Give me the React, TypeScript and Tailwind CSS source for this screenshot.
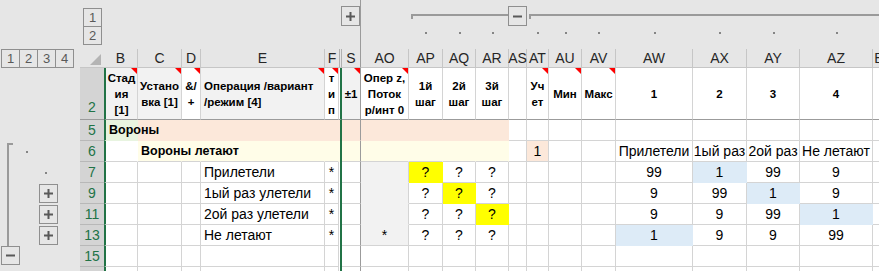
import React from "react";

type Col = { k: string; l: string; w: string };
type Spec = {
  t?: React.ReactNode;
  bg?: string;
  r?: string;
  b?: string;
  a?: string;
};
type RowDef = {
  n: string;
  out: { line?: "start" | "mid" | "minus"; dot2?: boolean; dot3?: boolean; plus?: boolean };
  gapAfter?: boolean;
  cells: Record<string, Spec>;
};

const cols: Col[] = [
  { k: "B", l: "B", w: "w-[34px]" },
  { k: "C", l: "C", w: "w-[44px]" },
  { k: "D", l: "D", w: "w-[19px]" },
  { k: "E", l: "E", w: "w-[124px]" },
  { k: "F", l: "F", w: "w-[14px]" },
  { k: "H", l: "", w: "w-[3px]" },
  { k: "S", l: "S", w: "w-[19px]" },
  { k: "AO", l: "AO", w: "w-[48px]" },
  { k: "AP", l: "AP", w: "w-[34px]" },
  { k: "AQ", l: "AQ", w: "w-[33px]" },
  { k: "AR", l: "AR", w: "w-[33px]" },
  { k: "AS", l: "AS", w: "w-[18px]" },
  { k: "AT", l: "AT", w: "w-[22px]" },
  { k: "AU", l: "AU", w: "w-[33px]" },
  { k: "AV", l: "AV", w: "w-[34px]" },
  { k: "AW", l: "AW", w: "w-[77px]" },
  { k: "AX", l: "AX", w: "w-[54px]" },
  { k: "AY", l: "AY", w: "w-[53px]" },
  { k: "AZ", l: "AZ", w: "w-[73px]" },
  { k: "BA", l: "BA", w: "w-[22px]" },
];

const dotted = ["AP", "AQ", "AR", "AT", "AU", "AV", "AW", "AX", "AY", "AZ"];

const PEACH = { bg: "bg-[#fce8da]", r: "border-r-[#fce8da]", b: "border-b-[#fce8da]" };
const YEL = { bg: "bg-[#fffde8]", r: "border-r-[#fffde8]" };
const GRAY = { bg: "bg-[#f2f2f2]", b: "border-b-[#f2f2f2]" };
const Y = { bg: "bg-[#ffff00]", r: "border-r-[#ffff00]", b: "border-b-[#ffff00]" };
const BL = { bg: "bg-[#ddebf7]", r: "border-r-[#ddebf7]", b: "border-b-[#ddebf7]" };

const header: Record<string, { lines: string[]; bg?: string; tri?: boolean; left?: boolean; color?: string }> = {
  B: { lines: ["Стад", "ия", "[1]"], bg: "bg-[#f2f2f2]", tri: true },
  C: { lines: ["Устано", "вка [1]"], bg: "bg-[#f2f2f2]", tri: true },
  D: { lines: ["&/", "+"], tri: true },
  E: { lines: ["Операция /вариант", "/режим [4]"], bg: "bg-[#f2f2f2]", tri: true, left: true },
  F: { lines: ["т", "и", "п"], tri: true },
  S: { lines: ["±1"], bg: "bg-[#f2f2f2]", tri: true },
  AO: { lines: ["Опер z,", "Поток", "р/инт 0"], tri: true },
  AP: { lines: ["1й", "шаг"] },
  AQ: { lines: ["2й", "шаг"] },
  AR: { lines: ["3й", "шаг"] },
  AT: { lines: ["Уч", "ет"], tri: true },
  AU: { lines: ["Мин"], tri: true },
  AV: { lines: ["Макс"], tri: true },
  AW: { lines: ["1"] },
  AX: { lines: ["2"] },
  AY: { lines: ["3"] },
  AZ: { lines: ["4"] },
  BA: { lines: ["5"], color: "text-[#ffc000]" },
};

const bold = (s: string) => (
  <span className="relative z-10 whitespace-nowrap text-[12.5px] font-bold">{s}</span>
);
const txt = (s: string) => <span className="whitespace-nowrap">{s}</span>;
const left = "justify-start pl-[3px]";

const rows: RowDef[] = [
  {
    n: "5",
    out: {},
    cells: {
      B: { bg: "bg-[#e8f4e0]", r: "border-r-[#e8f4e0]", b: "border-b-[#e8f4e0]", a: left, t: bold("Вороны") },
      C: PEACH, D: PEACH, E: PEACH, F: PEACH, H: PEACH, S: PEACH,
      AO: PEACH, AP: PEACH, AQ: PEACH, AR: PEACH,
    },
  },
  {
    n: "6",
    out: { line: "start", dot2: true },
    cells: {
      B: { r: "border-r-white" },
      C: { ...YEL, a: left, t: bold("Вороны летают") },
      D: YEL, E: YEL, F: YEL, H: YEL, S: YEL, AO: YEL, AP: YEL, AQ: YEL, AR: YEL,
      AT: { bg: "bg-[#fce8da]", t: "1" },
      AW: { t: txt("Прилетели") },
      AX: { t: txt("1ый раз") },
      AY: { t: txt("2ой раз") },
      AZ: { t: txt("Не летают") },
    },
  },
  {
    n: "7",
    out: { line: "mid", dot3: true },
    gapAfter: true,
    cells: {
      E: { a: left, t: txt("Прилетели") },
      F: { t: "*" },
      AO: GRAY,
      AP: { ...Y, t: "?" }, AQ: { t: "?" }, AR: { t: "?" },
      AW: { t: "99" }, AX: { ...BL, t: "1" }, AY: { t: "99" }, AZ: { t: "9" },
    },
  },
  {
    n: "9",
    out: { line: "mid", plus: true },
    gapAfter: true,
    cells: {
      E: { a: left, t: txt("1ый раз улетели") },
      F: { t: "*" },
      AO: GRAY,
      AP: { t: "?" }, AQ: { ...Y, t: "?" }, AR: { t: "?" },
      AW: { t: "9" }, AX: { t: "99" }, AY: { ...BL, t: "1" }, AZ: { t: "9" },
    },
  },
  {
    n: "11",
    out: { line: "mid", plus: true },
    gapAfter: true,
    cells: {
      E: { a: left, t: txt("2ой раз улетели") },
      F: { t: "*" },
      AO: GRAY,
      AP: { t: "?" }, AQ: { t: "?" }, AR: { ...Y, t: "?" },
      AW: { t: "9" }, AX: { t: "9" }, AY: { t: "99" }, AZ: { ...BL, t: "1" },
    },
  },
  {
    n: "13",
    out: { line: "mid", plus: true },
    gapAfter: true,
    cells: {
      E: { a: left, t: txt("Не летают") },
      F: { t: "*" },
      AO: { bg: "bg-[#f2f2f2]", t: "*" },
      AP: { t: "?" }, AQ: { t: "?" }, AR: { t: "?" },
      AW: { ...BL, t: "1" }, AX: { t: "9" }, AY: { t: "9" }, AZ: { t: "99" },
    },
  },
  { n: "15", out: { line: "minus" }, cells: {} },
  { n: "", out: {}, cells: {} },
];

const btn =
  "flex shrink-0 items-center justify-center border border-[#8f8f8f] bg-[#e6e6e6] text-[13px] leading-none text-[#595959]";

const Plus = () => (
  <svg width="9" height="9" viewBox="0 0 9 9">
    <path d="M0 4.5h9M4.5 0v9" stroke="#595959" strokeWidth="2" />
  </svg>
);

const Minus = () => (
  <svg width="9" height="9" viewBox="0 0 9 9">
    <path d="M0 4.5h9" stroke="#595959" strokeWidth="2" />
  </svg>
);

const Tri = () => (
  <svg className="absolute right-0 top-0" width="6" height="6" viewBox="0 0 6 6">
    <polygon points="0,0 6,0 6,6" fill="#ff0000" />
  </svg>
);

const Dot = ({ cls = "" }: { cls?: string }) => (
  <div className={`h-[2px] w-[2px] bg-[#858585] ${cls}`} />
);

const RowOutline = ({ out }: { out: RowDef["out"] }) => (
  <div className="flex h-full w-[80px] shrink-0 bg-[#e6e6e6]">
    <div className="h-full w-[20px] shrink-0">
      {out.line === "start" && (
        <div className="ml-[7px] mt-[2px] h-[19px] w-[6px] border-l-2 border-t-2 border-[#9a9a9a]" />
      )}
      {out.line === "mid" && <div className="ml-[7px] h-full border-l-2 border-[#9a9a9a]" />}
      {out.line === "minus" && (
        <div className={`${btn} ml-px h-[19px] w-[19px]`}>
          <Minus />
        </div>
      )}
    </div>
    <div className="flex h-full w-[19px] shrink-0 items-center">
      {out.dot2 && <Dot cls="ml-[6px]" />}
    </div>
    <div className="flex h-full w-[19px] shrink-0 items-center">
      {out.dot3 && <Dot cls="ml-[6px]" />}
      {out.plus && (
        <div className={`${btn} h-[19px] w-[19px]`}>
          <Plus />
        </div>
      )}
    </div>
  </div>
);

const TopBand = () => (
  <div className="flex h-[49px] shrink-0 bg-[#e6e6e6]">
    <div className="w-[80px] shrink-0" />
    <div className="w-[24px] shrink-0 pl-[3px] pt-[8px]">
      <div className={`${btn} h-[19px] w-[19px]`}>1</div>
      <div className={`${btn} -mt-px h-[19px] w-[19px]`}>2</div>
    </div>
    {cols.map((c) => {
      const first = c.k === "AP" || c.k === "AT";
      const line = ["AQ", "AR", "AU", "AV", "AW", "AX", "AY", "AZ", "BA"].includes(c.k);
      return (
        <div
          key={c.k}
          className={`flex h-full shrink-0 flex-col ${c.w} ${c.k === "S" ? "border-r border-[#9b9b9b]" : ""}`}
        >
          {c.k === "S" && (
            <div className={`${btn} -ml-px mt-[6px] h-[20px] w-[19px]`}>
              <Plus />
            </div>
          )}
          {c.k === "AS" && (
            <div className={`${btn} -ml-px mt-[6px] h-[20px] w-[19px]`}>
              <Minus />
            </div>
          )}
          {(first || line) && (
            <div className="h-[20px] shrink-0">
              {first && <div className="ml-[2px] mt-[14px] h-[5px] border-l-2 border-t-2 border-[#9a9a9a]" />}
              {line && <div className="mt-[14px] border-t-2 border-[#9a9a9a]" />}
            </div>
          )}
          {dotted.includes(c.k) && <Dot cls="mx-auto mt-[12px]" />}
        </div>
      );
    })}
  </div>
);

const LetterRow = () => (
  <div className="flex h-[19px] shrink-0 bg-[#e6e6e6]">
    <div className="flex w-[80px] shrink-0 pl-px">
      {["1", "2", "3", "4"].map((n, i) => (
        <div key={n} className={`${btn} h-[19px] w-[19px] ${i > 0 ? "-ml-px" : ""}`}>
          {n}
        </div>
      ))}
    </div>
    <div className="flex w-[24px] shrink-0 items-end justify-end border-b border-[#c6c6c6] pb-[2px] pr-[3px]">
      <svg width="11" height="11" viewBox="0 0 11 11">
        <polygon points="11,0 11,11 0,11" fill="#b4b4b4" />
      </svg>
    </div>
    {cols.map((c) => {
      let border = "border-r border-r-[#c6c6c6]";
      if (c.k === "F") border = "";
      if (c.k === "H") border = "border-x border-x-[#b0b0b0]";
      if (c.k === "S") border = "border-r border-r-[#9b9b9b]";
      return (
        <div
          key={c.k}
          className={`flex h-full shrink-0 items-center justify-center border-b border-b-[#c6c6c6] text-[14px] text-[#262626] ${c.w} ${border}`}
        >
          {c.l}
        </div>
      );
    })}
  </div>
);

const HeaderRow = () => (
  <div className="flex h-[52px] shrink-0">
    <div className="w-[80px] shrink-0 bg-[#e6e6e6]" />
    <div className="flex w-[24px] shrink-0 items-end justify-center border-b border-[#9b9b9b] bg-[#d4d4d4] pb-px text-[14px] text-[#217346]">
      2
    </div>
    {cols.map((c) => {
      if (c.k === "H") {
        return (
          <div key={c.k} className={`h-full shrink-0 border-b border-r-2 border-b-[#9b9b9b] border-r-[#217346] bg-white ${c.w}`} />
        );
      }
      const h = header[c.k];
      return (
        <div
          key={c.k}
          className={`relative flex h-full shrink-0 flex-col justify-center border-b border-r border-b-[#9b9b9b] text-[11.5px] font-bold leading-[16px] ${c.w} ${
            c.k === "S" ? "border-r-[#9b9b9b]" : "border-r-[#d4d4d4]"
          } ${c.k === "B" ? "border-l-2 border-l-[#217346]" : ""} ${h?.bg ?? "bg-white"} ${
            h?.left ? "items-start pl-[3px]" : "items-center"
          } ${h?.color ?? "text-black"}`}
        >
          {h?.lines.map((s) => (
            <span key={s} className="whitespace-nowrap">
              {s}
            </span>
          ))}
          {h?.tri && <Tri />}
        </div>
      );
    })}
  </div>
);

const BodyRow = ({ row }: { row: RowDef }) => (
  <div className="flex h-[21px] shrink-0">
    <RowOutline out={row.out} />
    <div className="flex h-full w-[24px] shrink-0 flex-col border-b border-[#b8b8b8] bg-[#d4d4d4] text-[14px] text-[#217346]">
      <div className="flex flex-1 items-center justify-center">{row.n}</div>
      {row.gapAfter && <div className="h-px bg-white" />}
    </div>
    {cols.map((c) => {
      const s = row.cells[c.k] ?? {};
      if (c.k === "H") {
        return (
          <div key={c.k} className={`h-full shrink-0 border-r-2 border-r-[#217346] ${c.w} ${s.bg ?? "bg-white"}`} />
        );
      }
      const r = c.k === "S" ? "border-r-[#9b9b9b]" : s.r ?? "border-r-[#d4d4d4]";
      return (
        <div
          key={c.k}
          className={`flex h-full shrink-0 items-center overflow-visible border-b border-r text-[14px] text-black ${c.w} ${
            s.bg ?? "bg-white"
          } ${r} ${s.b ?? "border-b-[#d4d4d4]"} ${c.k === "B" ? "border-l-2 border-l-[#217346]" : ""} ${
            s.a ?? "justify-center"
          }`}
        >
          {s.t}
        </div>
      );
    })}
  </div>
);

export default function App() {
  return (
    <div className="flex h-[271px] w-[879px] flex-col overflow-hidden bg-[#e6e6e6] font-['Liberation_Sans',Arial,sans-serif]">
      <TopBand />
      <LetterRow />
      <HeaderRow />
      {rows.map((row, i) => (
        <BodyRow key={i} row={row} />
      ))}
    </div>
  );
}
